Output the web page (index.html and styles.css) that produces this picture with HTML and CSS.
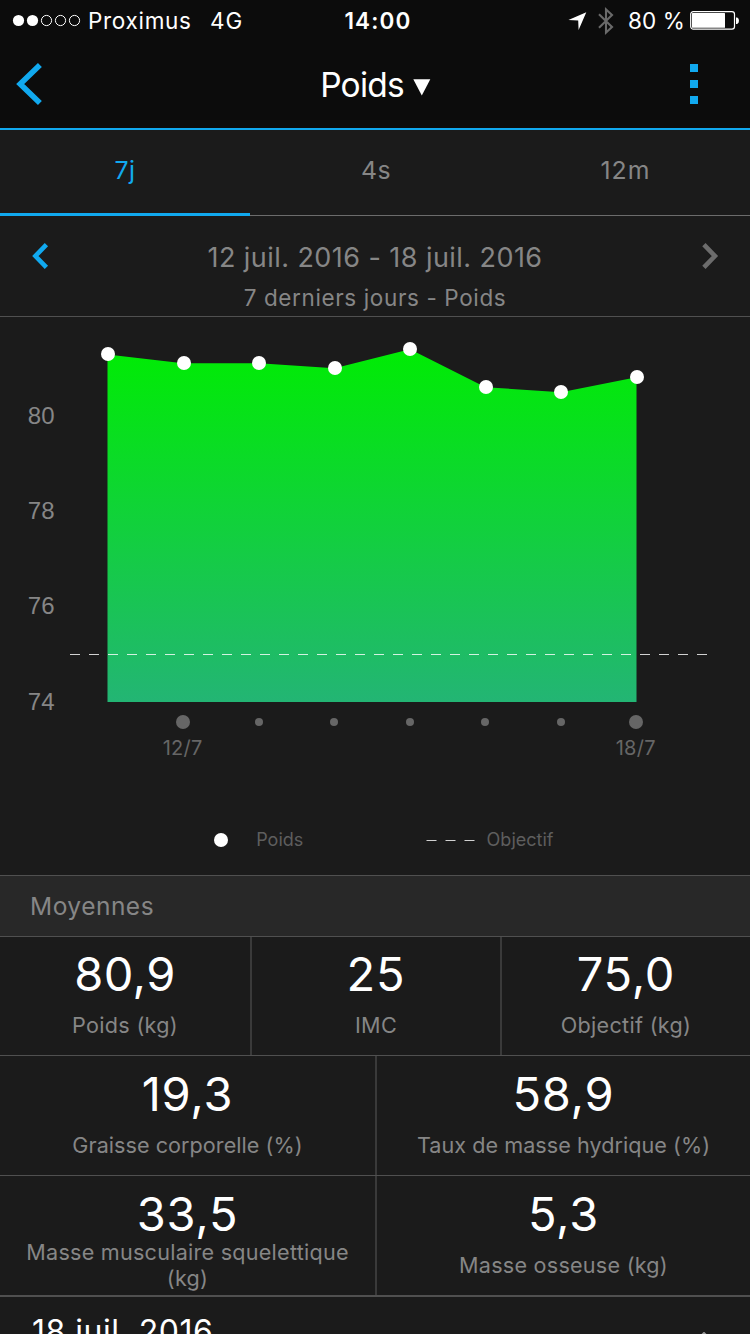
FILE: index.html
```
<!DOCTYPE html>
<html lang="fr">
<head>
<meta charset="utf-8">
<title>Poids</title>
<link rel="stylesheet" href="styles.css">
</head>
<body>
<div class="screen">
  <div class="status">
    <div class="status-left">
      <svg class="signal" width="70" height="14" viewBox="0 0 70 14">
        <g fill="#fff"><circle cx="6.5" cy="7.5" r="5.6"/><circle cx="20.5" cy="7.5" r="5.6"/></g>
        <g fill="none" stroke="#fff" stroke-width="1"><circle cx="34.5" cy="7.5" r="5.1"/><circle cx="48.5" cy="7.5" r="5.1"/><circle cx="62.5" cy="7.5" r="5.1"/></g>
      </svg>
      <span class="carrier">Proximus</span>
      <span class="network">4G</span>
    </div>
    <div class="clock">14:00</div>
    <div class="status-right">
      <svg class="location" width="19" height="19" viewBox="0 0 19 19"><path d="M18.3 0.3 L10.6 18 L10.2 8.6 L0.4 7.9 Z" fill="#fff"/></svg>
      <svg class="bluetooth" width="16" height="28" viewBox="0 0 16 28"><path d="M1 7.3 L14 20 L8 25.5 V2.5 L14 8 L1 20.7" fill="none" stroke="#6a6a6a" stroke-width="2.1"/></svg>
      <span class="percent">80 %</span>
      <svg class="battery" width="50" height="20" viewBox="0 0 50 20">
        <rect x="0.7" y="1.6" width="43.8" height="17.6" rx="2.6" fill="none" stroke="#fff" stroke-width="1.2"/>
        <rect x="2" y="3" width="33" height="14.8" rx="0.6" fill="#fff"/>
        <path d="M46 7.4 h1.2 q1.8 1 1.8 3.3 q0 2.3 -1.8 3.3 h-1.2 z" fill="#fff"/>
      </svg>
    </div>
  </div>

  <div class="navbar">
    <svg class="back" width="28" height="44" viewBox="0 0 28 44"><path d="M24.9 3 L5.2 22 L24.9 41" fill="none" stroke="#11a9ef" stroke-width="5.6"/></svg>
    <div class="title"><span class="title-text">Poids</span><svg width="18" height="17" viewBox="0 0 18 17"><path d="M0.3 0.3 H17.3 L8.8 16.6 Z" fill="#fff"/></svg></div>
    <div class="more"><i class="more-dot"></i><i class="more-dot"></i><i class="more-dot"></i></div>
  </div>

  <div class="tabs">
    <div class="tab tab-active">7j</div>
    <div class="tab tab-mid">4s</div>
    <div class="tab tab-wide">12m</div>
  </div>

  <div class="period">
    <svg class="prev" width="18" height="28" viewBox="0 0 18 28"><path d="M15.4 2.7 L4.4 14 L15.4 25.3" fill="none" stroke="#11a9ef" stroke-width="4.6"/></svg>
    <div class="period-text">
      <div class="period-range">12 juil. 2016 - 18 juil. 2016</div>
      <div class="period-sub">7 derniers jours - Poids</div>
    </div>
    <svg class="next" width="18" height="28" viewBox="0 0 18 28"><path d="M2.9 2.7 L13.9 14 L2.9 25.3" fill="none" stroke="#6c6c6c" stroke-width="4.6"/></svg>
  </div>

  <svg class="chart" width="750" height="558" viewBox="0 317 750 558">
    <defs>
      <linearGradient id="area" gradientUnits="userSpaceOnUse" x1="0" y1="349" x2="0" y2="702">
        <stop offset="0" stop-color="#00ec04"/><stop offset="1" stop-color="#23b574"/>
      </linearGradient>
    </defs>
    <path d="M107.5 354.5 L183 363.2 L259 363.2 L334.5 368.2 L410 349.2 L485.5 387.2 L561 392.2 L636.5 377.2 V702 H107.5 Z" fill="url(#area)"/>
    <path d="M70 654.5 H707" stroke="#fff" stroke-opacity=".8" stroke-width="1.2" stroke-dasharray="10 9"/>
    <g fill="#fff">
      <circle cx="108" cy="354" r="7"/><circle cx="184" cy="363" r="7"/><circle cx="259" cy="363" r="7"/><circle cx="335" cy="368" r="7"/>
      <circle cx="410" cy="349" r="7"/><circle cx="486" cy="387" r="7"/><circle cx="561" cy="392" r="7"/><circle cx="637" cy="377" r="7"/>
    </g>
    <g fill="#666">
      <circle cx="183" cy="722" r="7"/><circle cx="259" cy="722" r="4"/><circle cx="334" cy="722" r="4"/><circle cx="410" cy="722" r="4"/>
      <circle cx="485" cy="722" r="4"/><circle cx="561" cy="722" r="4"/><circle cx="636" cy="722" r="7"/>
    </g>
    <g class="axis-y">
      <text x="54.5" y="424">80</text><text x="54.5" y="519">78</text><text x="54.5" y="614">76</text><text x="54.5" y="710">74</text>
    </g>
    <g class="axis-x">
      <text x="182.7" y="755">12/7</text><text x="635.8" y="755">18/7</text>
    </g>
    <circle cx="221" cy="840" r="7" fill="#fff"/>
    <path d="M426.5 840.5 H475" stroke="#fff" stroke-opacity=".8" stroke-width="1.2" stroke-dasharray="10 9"/>
    <g class="legend">
      <text x="256.2" y="846">Poids</text><text x="486.6" y="846">Objectif</text>
    </g>
  </svg>

  <div class="section">Moyennes</div>

  <div class="row row-three">
    <div class="cell"><div class="value value-tight">80,9</div><div class="label">Poids (kg)</div></div>
    <div class="cell"><div class="value">25</div><div class="label">IMC</div></div>
    <div class="cell"><div class="value">75,0</div><div class="label">Objectif (kg)</div></div>
  </div>
  <div class="row">
    <div class="cell"><div class="value">19,3</div><div class="label label-long">Graisse corporelle (%)</div></div>
    <div class="cell"><div class="value">58,9</div><div class="label label-long">Taux de masse hydrique (%)</div></div>
  </div>
  <div class="row row-last">
    <div class="cell"><div class="value">33,5</div><div class="label label-mid">Masse musculaire squelettique (kg)</div></div>
    <div class="cell"><div class="value">5,3</div><div class="label label-mid">Masse osseuse (kg)</div></div>
  </div>

  <div class="day">
    <span>18 juil. 2016</span>
    <svg class="caret" width="26" height="14" viewBox="0 0 26 14"><path d="M2 12 L13 1 L24 12" fill="none" stroke="#999" stroke-width="2"/></svg>
  </div>
</div>
</body>
</html>
```
FILE: styles.css
```
* { box-sizing: border-box; }

body {
  margin: 0;
  background: #1b1b1b;
}

svg { display: block; flex: none; }

.screen {
  width: 750px;
  height: 1334px;
  overflow: hidden;
  background: #1b1b1b;
  color: #868686;
  font-family: Inter, "Liberation Sans", sans-serif;
  white-space: nowrap;
}

/* Status bar */
.status {
  display: grid;
  grid-template-columns: 300px 156px 294px;
  height: 40px;
  background: #0c0c0c;
  color: #fff;
  font-size: 22.5px;
  line-height: 42px;
}
.status-left {
  display: flex;
  padding-left: 12px;
}
.signal { margin-top: 13px; }
.carrier {
  width: 122px;
  margin-left: 6px;
  letter-spacing: .7px;
}
.network { letter-spacing: 1px; }
.clock {
  text-align: center;
  font-weight: 600;
  letter-spacing: 1.15px;
}
.status-right {
  display: flex;
  justify-content: flex-end;
  padding-right: 10px;
}
.location { margin-top: 11.5px; }
.bluetooth { margin: 6.5px 14px 0 11px; }
.percent {
  width: 62px;
  letter-spacing: .1px;
}
.battery { margin-top: 10px; }

/* Navigation bar */
.navbar {
  display: flex;
  justify-content: space-between;
  align-items: center;
  height: 90px;
  padding: 0 52px 0 15px;
  border-bottom: 2px solid #11a9ef;
  background: #0c0c0c;
}
.title {
  display: flex;
  align-items: center;
  gap: 9px;
  margin-left: 18px;
  padding-top: 2px;
  color: #fff;
  font-size: 33.5px;
  line-height: 44px;
}
.title-text { letter-spacing: -.8px; }
.title svg { margin-top: 4px; }
.more { display: grid; gap: 8px; }
.more-dot {
  width: 8px;
  height: 8px;
  background: #11a9ef;
}

/* Range tabs */
.tabs {
  display: grid;
  grid-template-columns: repeat(3, 250px);
  height: 86px;
  font-size: 24.8px;
  line-height: 81px;
  text-align: center;
}
.tab {
  border-bottom: 1px solid #6c6c6c;
  letter-spacing: .5px;
}
.tab-active {
  border-bottom: 3px solid #11a9ef;
  color: #11a9ef;
}
.tab-mid { padding-left: 2px; }
.tab-wide {
  padding-left: 1px;
  letter-spacing: 1.1px;
}

/* Period selector */
.period {
  display: flex;
  justify-content: space-between;
  height: 101px;
  padding: 22px 31px 0;
  border-bottom: 1px solid #505050;
}
.prev, .next { margin-top: 4px; }
.period-text { text-align: center; }
.period-range {
  font-size: 27px;
  line-height: 39px;
  letter-spacing: .44px;
}
.period-sub {
  font-size: 22.5px;
  line-height: 42px;
  letter-spacing: .62px;
}

/* Chart */
.axis-y {
  fill: #868686;
  font: 24px "Liberation Sans", sans-serif;
  text-anchor: end;
}
.axis-x {
  fill: #666;
  font-size: 20px;
  letter-spacing: .3px;
  text-anchor: middle;
}
.legend {
  fill: #5e5e5e;
  font-size: 18px;
}

/* Averages */
.section {
  height: 62px;
  padding-left: 30px;
  border-top: 1px solid #505050;
  border-bottom: 1px solid #505050;
  background: #282828;
  font-size: 24.5px;
  line-height: 61px;
  letter-spacing: .5px;
}
.row {
  display: grid;
  grid-template-columns: 377px 373px;
  height: 120px;
  border-bottom: 1px solid #505050;
}
.row-three {
  grid-template-columns: 252px 250px 248px;
  height: 119px;
}
.row-last {
  height: 121px;
  border-bottom-width: 2px;
}
.cell {
  display: flex;
  flex-direction: column;
  padding: 0 20px;
  border-right: 2px solid #3a3a3a;
  text-align: center;
}
.cell:last-child { border-right: 0; }
.value {
  height: 63px;
  color: #fff;
  font-size: 47px;
  line-height: 76px;
  letter-spacing: .8px;
}
.value-tight { letter-spacing: .4px; }
.row-three .value {
  height: 62px;
  line-height: 74px;
}
.label {
  display: flex;
  align-items: center;
  justify-content: center;
  height: 51px;
  font-size: 21.6px;
  line-height: 26px;
  letter-spacing: .3px;
  white-space: normal;
}
.label-long { letter-spacing: .04px; }
.label-mid { letter-spacing: .24px; }

/* Day entry, continues below the fold */
.day {
  display: flex;
  justify-content: space-between;
  padding: 0 33px 0 32px;
  color: #fff;
  font-size: 32px;
  line-height: 69px;
  letter-spacing: .5px;
}
.caret { margin-top: 35px; }
```
